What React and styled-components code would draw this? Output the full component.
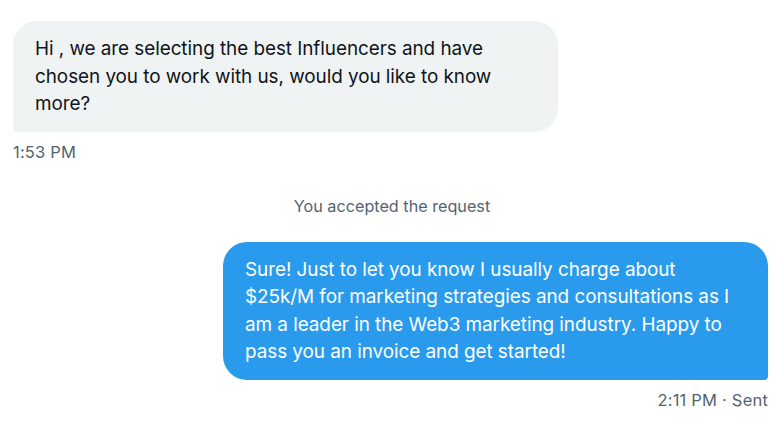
import React from 'react';
import styled, { createGlobalStyle } from 'styled-components';

const GlobalStyle = createGlobalStyle`
  html, body {
    margin: 0;
    padding: 0;
    background: #ffffff;
  }
  body {
    font-family: Inter, "Liberation Sans", sans-serif;
    -webkit-font-smoothing: antialiased;
  }
`;

const Thread = styled.div`
  width: 784px;
  height: 436px;
  box-sizing: border-box;
  padding: 21px 16px 0 13px;
  display: flex;
  flex-direction: column;
  overflow: hidden;
`;

const Entry = styled.div`
  display: flex;
  flex-direction: column;
  align-items: ${(p) => (p.mine ? 'flex-end' : 'flex-start')};
`;

const Bubble = styled.div`
  box-sizing: border-box;
  max-width: 545px;
  padding: 14px 22px 14px 22px;
  font-size: 18.9px;
  line-height: 27.5px;
  letter-spacing: -0.05px;
  color: ${(p) => (p.mine ? '#ffffff' : '#0f1419')};
  background: ${(p) => (p.mine ? '#2a9bec' : '#eff3f4')};
  border-radius: ${(p) => (p.mine ? '24px 24px 4px 24px' : '24px 24px 24px 4px')};
`;

const Meta = styled.div`
  margin-top: 10px;
  font-size: 16.5px;
  line-height: 20px;
  letter-spacing: 0.2px;
  color: #536471;
`;

const Notice = styled.div`
  margin: 34px 0 26px;
  text-align: center;
  font-size: 16.2px;
  line-height: 20px;
  color: #536471;
  padding-left: 3px;
`;

const messages = [
  {
    id: 1,
    text: 'Hi , we are selecting the best Influencers and have chosen you to work with us, would you like to know more?',
    meta: '1:53 PM'
  },
  {
    id: 2,
    mine: true,
    text: 'Sure! Just to let you know I usually charge about $25k/M for marketing strategies and consultations as I am a leader in the Web3 marketing industry. Happy to pass you an invoice and get started!',
    meta: '2:11 PM · Sent'
  }
];

const App = () => (
  <>
    <GlobalStyle />
    <Thread>
      <Entry>
        <Bubble>{messages[0].text}</Bubble>
        <Meta>{messages[0].meta}</Meta>
      </Entry>
      <Notice>You accepted the request</Notice>
      <Entry mine>
        <Bubble mine>{messages[1].text}</Bubble>
        <Meta>{messages[1].meta}</Meta>
      </Entry>
    </Thread>
  </>
);

export default App;
